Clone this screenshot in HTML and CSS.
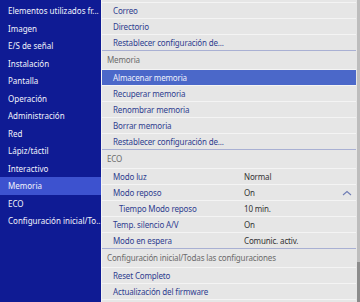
FILE: index.html
```html
<!DOCTYPE html>
<html lang="es">
<head>
    <meta charset="UTF-8">
    <title>Memoria</title>
    <link rel="stylesheet" href="styles.css">
</head>
<body>
    <div class="screen">
        <ul class="sidebar">
            <li>Elementos utilizados fr...</li>
            <li>Imagen</li>
            <li>E/S de señal</li>
            <li>Instalación</li>
            <li>Pantalla</li>
            <li>Operación</li>
            <li>Administración</li>
            <li>Red</li>
            <li>Lápiz/táctil</li>
            <li>Interactivo</li>
            <li class="active">Memoria</li>
            <li>ECO</li>
            <li>Configuración inicial/To...</li>
        </ul>

        <div class="panel">
            <div class="list">
                <div class="row stub"></div>
                <div class="row"><span class="label">Correo</span></div>
                <div class="row"><span class="label">Directorio</span></div>
                <div class="row last"><span class="label">Restablecer configuración de...</span></div>

                <div class="section">Memoria</div>
                <div class="row selected"><span class="label">Almacenar memoria</span></div>
                <div class="row"><span class="label">Recuperar memoria</span></div>
                <div class="row"><span class="label">Renombrar memoria</span></div>
                <div class="row"><span class="label">Borrar memoria</span></div>
                <div class="row last"><span class="label">Restablecer configuración de...</span></div>

                <div class="section">ECO</div>
                <div class="row"><span class="label">Modo luz</span><span class="value">Normal</span></div>
                <div class="row">
                    <span class="label">Modo reposo</span><span class="value">On</span>
                    <svg class="chevron" width="10" height="6" viewBox="0 0 10 6"><path d="M1 5 L5 1.5 L9 5" fill="none" stroke="#6f7db5" stroke-width="1.1"/></svg>
                </div>
                <div class="row sub"><span class="label">Tiempo Modo reposo</span><span class="value">10 min.</span></div>
                <div class="row"><span class="label">Temp. silencio A/V</span><span class="value">On</span></div>
                <div class="row last"><span class="label">Modo en espera</span><span class="value">Comunic. activ.</span></div>

                <div class="section">Configuración inicial/Todas las configuraciones</div>
                <div class="row"><span class="label">Reset Completo</span></div>
                <div class="row"><span class="label">Actualización del firmware</span></div>
            </div>
            <div class="scrollbar"><div class="thumb"></div></div>
        </div>
    </div>
</body>
</html>
```

FILE: styles.css
```css
body {
    margin: 0;
    font-family: "Noto Sans", "Open Sans", sans-serif;
    font-size: 8px;
    background-color: #f3f3f3;
}

.screen {
    display: grid;
    grid-template-columns: 101px 1fr;
    column-gap: 1px;
    height: 302px;
    overflow: hidden;
}

.sidebar {
    list-style: none;
    margin: 0;
    padding: 2px 0 0;
    background-color: #0f1b94;
    color: #f2f3fb;
}

.sidebar li {
    height: 17.5px;
    line-height: 17.5px;
    padding-left: 8px;
    white-space: nowrap;
}

.sidebar li.active {
    background-color: #3d52cf;
}

.panel {
    display: flex;
    background-color: #e6e6e6;
    letter-spacing: -0.15px;
}

.list {
    flex: 1;
}

.row {
    display: flex;
    align-items: center;
    height: 15px;
    border-bottom: 1px solid #f4f4f4;
    color: #2e3d8f;
    padding-left: 11px;
    position: relative;
}

.row.stub {
    height: 2px;
}

.row.last {
    border-bottom: 1px solid #a9b0d3;
}

.row.sub {
    padding-left: 17px;
}

.row.selected {
    background-color: #4b68c9;
    color: #eef1fb;
}

.label {
    width: 131px;
    white-space: nowrap;
}

.row.sub .label {
    width: 125px;
}

.value {
    color: #333;
}

.chevron {
    position: absolute;
    right: 4px;
    top: 5px;
}

.section {
    height: 18px;
    line-height: 18px;
    padding-left: 5px;
    color: #6b6b6b;
    border-bottom: 1px solid #f4f4f4;
    white-space: nowrap;
    overflow: hidden;
}

.scrollbar {
    width: 3px;
    margin-left: 1px;
    background-color: #bdbdbd;
    display: flex;
    flex-direction: column;
    justify-content: flex-end;
}

.thumb {
    height: 40px;
    background-color: #8c8c8c;
}
```
